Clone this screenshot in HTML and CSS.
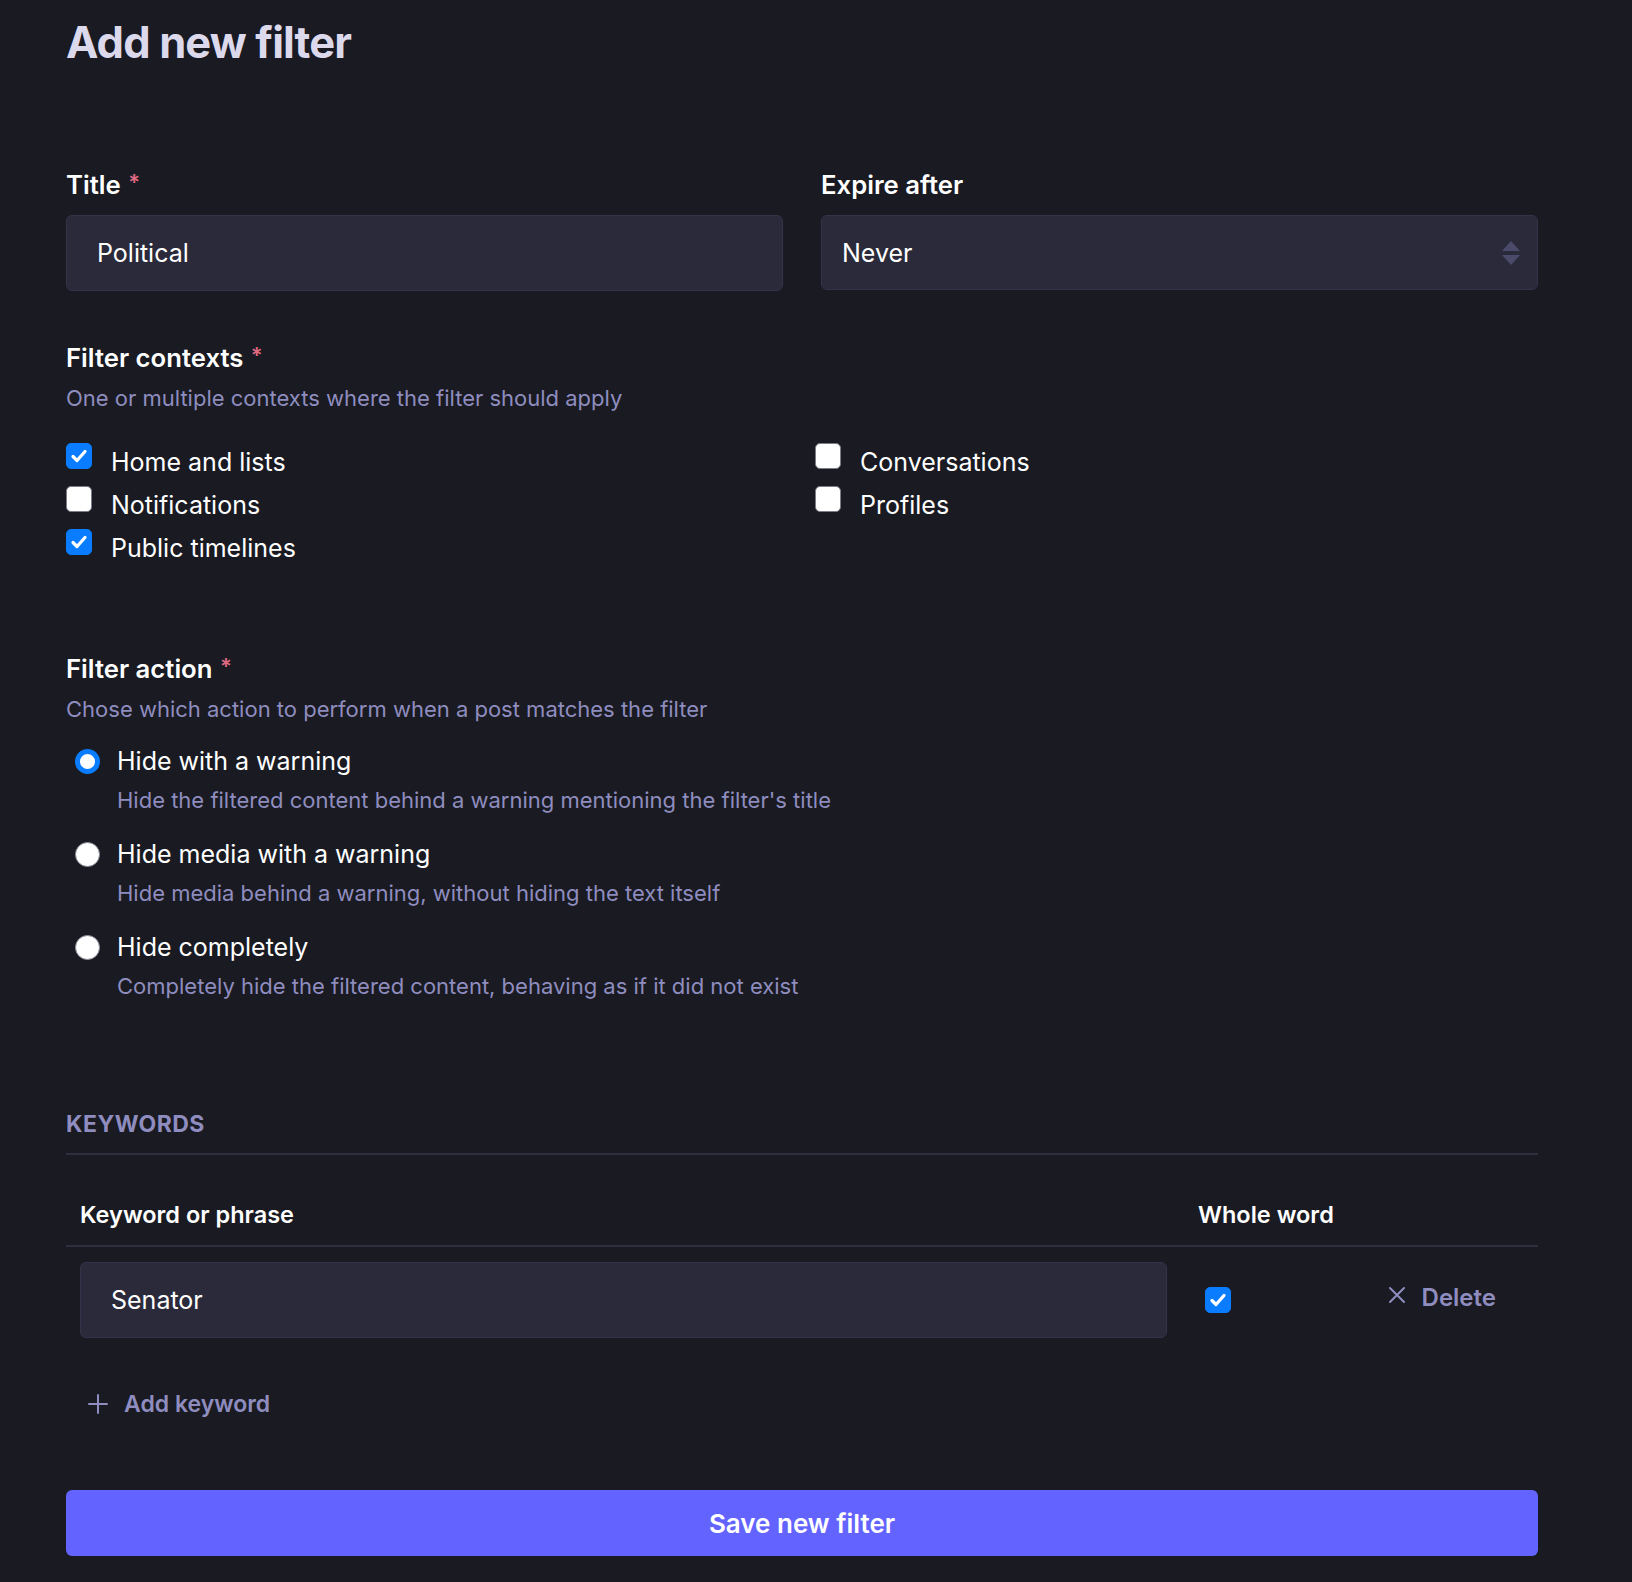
FILE: index.html
```html
<!DOCTYPE html>
<html lang="en">
<head>
<meta charset="utf-8">
<title>Add new filter</title>
<link rel="stylesheet" href="styles.css">
</head>
<body>
<main class="page">
  <h1 class="heading">Add new filter</h1>

  <div class="fields-row">
    <div class="field">
      <label class="label">Title <span class="req">*</span></label>
      <div class="input">Political</div>
    </div>
    <div class="field">
      <label class="label">Expire after</label>
      <div class="input select">
        <span>Never</span>
        <svg class="arrows" width="20" height="26" viewBox="0 0 20 26"><path d="M10 1 L19 11 L1 11 Z" fill="#4b4a6b"/><path d="M1 15 L19 15 L10 25 Z" fill="#4b4a6b"/></svg>
      </div>
    </div>
  </div>

  <section class="group contexts">
    <div class="label">Filter contexts <span class="req">*</span></div>
    <div class="hint">One or multiple contexts where the filter should apply</div>
    <div class="checks">
      <div class="check"><span class="box on"><svg width="26" height="26" viewBox="0 0 26 26"><path d="M7 13.5 L11 17.5 L19 8.5" fill="none" stroke="#fff" stroke-width="3.2" stroke-linecap="round" stroke-linejoin="round"/></svg></span><span>Home and lists</span></div>
      <div class="check"><span class="box"></span><span>Notifications</span></div>
      <div class="check"><span class="box on"><svg width="26" height="26" viewBox="0 0 26 26"><path d="M7 13.5 L11 17.5 L19 8.5" fill="none" stroke="#fff" stroke-width="3.2" stroke-linecap="round" stroke-linejoin="round"/></svg></span><span>Public timelines</span></div>
      <div class="check"><span class="box"></span><span>Conversations</span></div>
      <div class="check"><span class="box"></span><span>Profiles</span></div>
    </div>
  </section>

  <section class="group actions">
    <div class="label">Filter action <span class="req">*</span></div>
    <div class="hint">Chose which action to perform when a post matches the filter</div>
    <div class="radios">
      <div class="radio-item">
        <div class="radio-row"><span class="radio on"></span><span>Hide with a warning</span></div>
        <div class="radio-desc">Hide the filtered content behind a warning mentioning the filter's title</div>
      </div>
      <div class="radio-item">
        <div class="radio-row"><span class="radio"></span><span>Hide media with a warning</span></div>
        <div class="radio-desc">Hide media behind a warning, without hiding the text itself</div>
      </div>
      <div class="radio-item">
        <div class="radio-row"><span class="radio"></span><span>Hide completely</span></div>
        <div class="radio-desc">Completely hide the filtered content, behaving as if it did not exist</div>
      </div>
    </div>
  </section>

  <section class="keywords">
    <h2 class="kw-title">KEYWORDS</h2>
    <div class="kw-head">
      <div class="kw-cell">Keyword or phrase</div>
      <div class="kw-cell">Whole word</div>
      <div class="kw-cell"></div>
    </div>
    <div class="kw-row">
      <div class="kw-cell kw-input-cell"><div class="input kw-input">Senator</div></div>
      <div class="kw-cell kw-check-cell"><span class="box on small"><svg width="26" height="26" viewBox="0 0 26 26"><path d="M7 13.5 L11 17.5 L19 8.5" fill="none" stroke="#fff" stroke-width="3.2" stroke-linecap="round" stroke-linejoin="round"/></svg></span></div>
      <div class="kw-cell kw-del-cell">
        <span class="delete"><svg width="18" height="18" viewBox="0 0 18 18"><path d="M2 2 L16 16 M16 2 L2 16" stroke="#8f8dbf" stroke-width="2" stroke-linecap="round"/></svg><span>Delete</span></span>
      </div>
    </div>
    <div class="add-kw"><svg width="20" height="20" viewBox="0 0 20 20"><path d="M10 1 V19 M1 10 H19" stroke="#8f8dbf" stroke-width="2" stroke-linecap="round"/></svg><span>Add keyword</span></div>
  </section>

  <button class="save" type="button">Save new filter</button>
</main>
</body>
</html>
```

FILE: styles.css
```css
html, body {
  margin: 0;
  background: #191a22;
}
body {
  font-family: Inter, "Noto Sans", sans-serif;
  color: #ffffff;
  padding-bottom: 26px;
}
.page {
  width: 1472px;
  margin-left: 66px;
  overflow: hidden;
}
.heading {
  margin: 12px 0 0;
  font-size: 43.5px;
  line-height: 60px;
  font-weight: 700;
  letter-spacing: -0.02em;
  color: #dcd9ec;
}
.fields-row {
  display: grid;
  grid-template-columns: 1fr 1fr;
  column-gap: 38px;
  margin-top: 98px;
}
.label {
  display: block;
  font-size: 25.7px;
  line-height: 30px;
  font-weight: 600;
  color: #ffffff;
}
.req {
  color: #e06a82;
  font-size: 22px;
  line-height: 1;
  position: relative;
  top: -4px;
  margin-left: 1px;
}
.field .label {
  margin-bottom: 15px;
}
.input {
  box-sizing: border-box;
  height: 76px;
  background: #2a2a3a;
  border: 1px solid #33334a;
  border-radius: 6px;
  padding: 0 30px;
  display: flex;
  align-items: center;
  font-size: 25px;
  color: #ffffff;
}
.select {
  height: 75px;
  padding: 0 16px 0 20px;
  justify-content: space-between;
}
.contexts {
  margin-top: 52px;
}
.hint {
  margin-top: 10px;
  font-size: 22px;
  line-height: 30px;
  color: #8f8dbf;
}
.checks {
  display: grid;
  grid-template-columns: 1fr 1fr;
  column-gap: 26px;
  grid-template-rows: repeat(3, 43px);
  grid-auto-flow: column;
  margin-top: 27px;
}
.check {
  display: flex;
  align-items: center;
  gap: 19px;
  font-size: 25px;
  line-height: 30px;
}
.box {
  width: 26px;
  height: 26px;
  box-sizing: border-box;
  border-radius: 5px;
  background: #ffffff;
  border: 1px solid #7c7c88;
  margin-bottom: 12px;
  flex: none;
  display: flex;
}
.box.on {
  background: #0a7cff;
  border-color: #0a7cff;
}
.box svg {
  margin: -1px;
}
.actions {
  margin-top: 85px;
}
.radios {
  margin-top: 19px;
  display: flex;
  flex-direction: column;
  gap: 21px;
}
.radio-row {
  display: flex;
  align-items: center;
  gap: 17px;
  padding-left: 9px;
  height: 36px;
  font-size: 25px;
}
.radio {
  width: 25px;
  height: 25px;
  box-sizing: border-box;
  border-radius: 50%;
  background: #ffffff;
  border: 1px solid #8a8a96;
  flex: none;
}
.radio.on {
  border: 5px solid #0a7cff;
}
.radio-desc {
  margin-top: 6px;
  padding-left: 51px;
  font-size: 22px;
  line-height: 30px;
  color: #8f8dbf;
}
.keywords {
  margin-top: 108px;
}
.kw-title {
  margin: 0;
  font-size: 23px;
  line-height: 30px;
  font-weight: 700;
  letter-spacing: 0.02em;
  color: #8f8dbf;
  padding-bottom: 14px;
  border-bottom: 2px solid #2e2e40;
}
.kw-head, .kw-row {
  display: grid;
  grid-template-columns: 1118px 166px 1fr;
}
.kw-head {
  margin-top: 45px;
  padding-bottom: 15px;
  border-bottom: 2px solid #2e2e40;
  font-size: 23.5px;
  line-height: 30px;
  font-weight: 600;
}
.kw-head .kw-cell {
  padding-left: 14px;
}
.kw-row {
  margin-top: 15px;
  align-items: center;
}
.kw-input-cell {
  padding: 0 17px 0 14px;
}
.kw-input {
  padding-left: 30px;
}
.kw-check-cell {
  padding-left: 21px;
  display: flex;
}
.kw-check-cell .box {
  margin-bottom: 0;
}
.kw-del-cell {
  display: flex;
  justify-content: flex-end;
  padding-right: 42px;
  padding-bottom: 6px;
}
.delete {
  display: flex;
  align-items: center;
  gap: 16px;
  font-size: 24px;
  font-weight: 600;
  color: #8f8dbf;
}
.delete svg {
  position: relative;
  top: -2px;
}
.add-kw {
  margin-top: 51px;
  padding-left: 22px;
  display: flex;
  align-items: center;
  gap: 16px;
  font-size: 23px;
  line-height: 30px;
  font-weight: 600;
  color: #8f8dbf;
}
.save {
  display: block;
  width: 100%;
  height: 66px;
  margin-top: 71px;
  border: 0;
  border-radius: 6px;
  background: #6364ff;
  color: #ffffff;
  font-family: Inter, "Noto Sans", sans-serif;
  font-size: 26px;
  font-weight: 600;
}
```
